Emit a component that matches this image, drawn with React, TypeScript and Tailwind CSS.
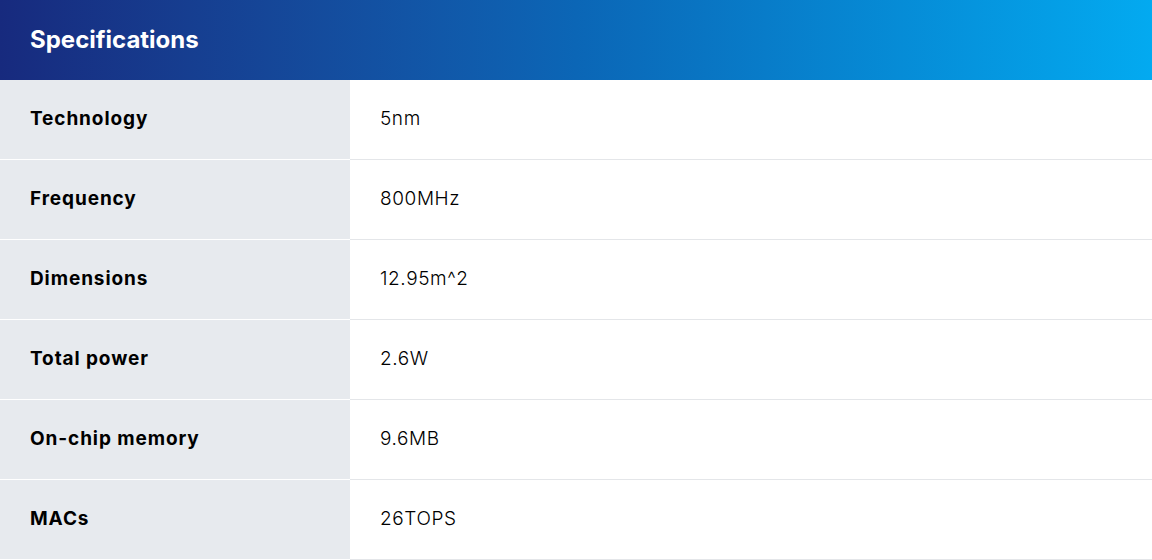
import React from "react";

const specs = [
  { label: "Technology", value: "5nm" },
  { label: "Frequency", value: "800MHz" },
  { label: "Dimensions", value: "12.95m^2" },
  { label: "Total power", value: "2.6W" },
  { label: "On-chip memory", value: "9.6MB" },
  { label: "MACs", value: "26TOPS" },
];

export default function App() {
  return (
    <div className="w-[1152px] h-[560px] bg-white font-['Inter',sans-serif] overflow-hidden">
      <div className="h-20 flex items-center px-[30px] bg-gradient-to-r from-[#172a7e] via-[#0b66b6] to-[#03aaf0]">
        <h2 className="text-white text-[24px] font-bold leading-none">Specifications</h2>
      </div>
      {specs.map((row) => (
        <div key={row.label} className="flex h-20">
          <div className="w-[350px] bg-[#e7eaee] border-b border-white flex items-center px-[30px] pb-px text-[19px] font-bold text-black tracking-[0.9px]">
            {row.label}
          </div>
          <div className="flex-1 border-b border-[#e4e6e9] flex items-center px-[30px] pb-px text-[19px] font-light text-black tracking-[0.6px]">
            {row.value}
          </div>
        </div>
      ))}
    </div>
  );
}
